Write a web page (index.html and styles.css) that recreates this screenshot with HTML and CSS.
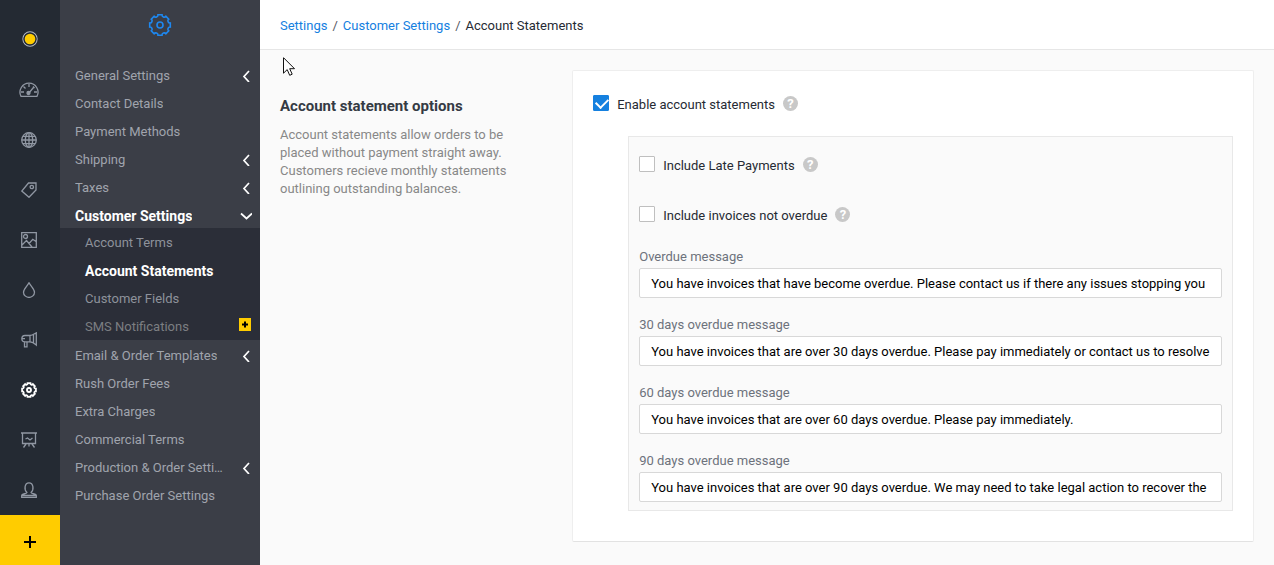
FILE: index.html
```html
<!DOCTYPE html>
<html lang="en">
<head>
  <meta charset="utf-8">
  <title>Account Statements</title>
  <meta name="viewport" content="width=device-width, initial-scale=1">
  <link rel="stylesheet" href="styles.css">
</head>

<body>
  <svg class="defs" aria-hidden="true">
    <symbol id="cog" viewBox="0 0 24 24">
      <path d="M10 1.7L14 1.7A2.2 2.2 0 0 0 17.9 3.3L20.7 6.1A2.2 2.2 0 0 0 22.3 10L22.3 14A2.2 2.2 0 0 0 20.7 17.9L17.9 20.7A2.2 2.2 0 0 0 14 22.3L10 22.3A2.2 2.2 0 0 0 6.1 20.7L3.3 17.9A2.2 2.2 0 0 0 1.7 14L1.7 10A2.2 2.2 0 0 0 3.3 6.1L6.1 3.3A2.2 2.2 0 0 0 10 1.7Z"/>
      <circle cx="12" cy="12" r="3"/>
    </symbol>
    <symbol id="left" viewBox="0 0 12 12"><path d="M9 1L4 6.500L9 12"/></symbol>
    <symbol id="down" viewBox="0 0 12 12"><path d="M1 3.500L6.500 8.500L12 3.500"/></symbol>
  </svg>

  <div class="app">
    <nav class="rail" aria-label="Main">
      <a class="logo" href="#" aria-label="Home"><svg viewBox="0 0 16 16"><circle class="ring" cx="8" cy="8" r="7"/><circle class="dot" cx="8" cy="8" r="6"/></svg></a>
      <a href="#" aria-label="Dashboard"><svg class="wide" viewBox="0 0 20 16"><path d="M2 14.3A9 9 0 1 1 18 14.3ZM10 2v3M4.500 4.500l2 2M2 10h3M15 10h3M9.500 11.500L14.500 5.500M14 4.500l1.500 1.500"/><circle class="solid" cx="9.500" cy="11" r="1.500"/></svg></a>
      <a href="#" aria-label="Website"><svg viewBox="0 0 16 16"><circle cx="8" cy="8" r="7.300"/><ellipse cx="8" cy="8" rx="3.700" ry="7.300"/><path d="M8 1v14M1 8h14M2 4.300h12M2 11.700h12"/></svg></a>
      <a href="#" aria-label="Products"><svg viewBox="0 0 16 16"><path d="M7.500 1H15V8L8 15.300L.8 9Z"/><circle cx="10.800" cy="5" r="1.700"/></svg></a>
      <a href="#" aria-label="Images"><svg viewBox="0 0 16 16"><path d="M.7.700H15.300V15.300H.700ZM1 13l4.500-4.500L11 15M8 11.500L11.800 7.300L15 9.500"/><circle cx="4.500" cy="4.500" r="2"/></svg></a>
      <a href="#" aria-label="Colours"><svg viewBox="0 0 16 16"><path d="M8 .8C6 4.500 2.500 7.200 2.500 10.200A5.500 5.200 0 0 0 13.500 10.200C13.500 7.200 10 4.500 8 .8Z"/></svg></a>
      <a href="#" aria-label="Marketing"><svg viewBox="0 0 16 16"><path d="M9 3.500H4A3 3 0 0 0 4 9.800H9ZM9 3.500C11.500 3.500 13 2 15.300.8V13C13 11 11.500 9.800 9 9.800M3.500 10V14.800H6V10M12.500 2.500V11M1 6.600H4"/></svg></a>
      <a class="current" href="#" aria-label="Settings"><svg><use href="#cog"/></svg></a>
      <a href="#" aria-label="Reports"><svg viewBox="0 0 16 16"><path d="M0 1H16M1.500 1V11.500H14.500V1M5 12L2.500 15.500M11 12L13.500 15.500M8 12V14.500M4.500 7L6.500 6L9 8L11.500 6"/></svg></a>
      <a href="#" aria-label="Account"><svg viewBox="0 0 16 16"><path d="M6 10.500C2.800 8 3.500.8 8 .8S13.200 8 10 10.500C10 12 15.300 11.500 15.300 13.500V15.300H.7V13.500C.7 11.500 6 12 6 10.500ZM1 13.500H15"/></svg></a>
      <button class="add" type="button" aria-label="Add"><svg viewBox="0 0 12 12"><path d="M6 0V12M0 6H12"/></svg></button>
    </nav>

    <aside class="sidebar">
      <svg class="sidebar-icon"><use href="#cog"/></svg>
      <ul class="menu">
        <li><a href="#"><span>General Settings</span><svg><use href="#left"/></svg></a></li>
        <li><a href="#"><span>Contact Details</span></a></li>
        <li><a href="#"><span>Payment Methods</span></a></li>
        <li><a href="#"><span>Shipping</span><svg><use href="#left"/></svg></a></li>
        <li><a href="#"><span>Taxes</span><svg><use href="#left"/></svg></a></li>
        <li>
          <a class="active" href="#"><span>Customer Settings</span><svg><use href="#down"/></svg></a>
          <ul class="submenu">
            <li><a href="#">Account Terms</a></li>
            <li><a class="active" href="#">Account Statements</a></li>
            <li><a href="#">Customer Fields</a></li>
            <li><a class="locked" href="#">SMS Notifications <svg class="plus" viewBox="0 0 12 13"><path d="M6 3.500V9.500M3 6.500H9"/></svg></a></li>
          </ul>
        </li>
        <li><a href="#"><span>Email &amp; Order Templates</span><svg><use href="#left"/></svg></a></li>
        <li><a href="#"><span>Rush Order Fees</span></a></li>
        <li><a href="#"><span>Extra Charges</span></a></li>
        <li><a href="#"><span>Commercial Terms</span></a></li>
        <li><a href="#"><span>Production &amp; Order Settings</span><svg><use href="#left"/></svg></a></li>
        <li><a href="#"><span>Purchase Order Settings</span></a></li>
      </ul>
    </aside>

    <main class="main">
      <header class="breadcrumb">
        <a href="#">Settings</a>
        <span class="sep">/</span>
        <a href="#">Customer Settings</a>
        <span class="sep">/</span>
        <span>Account Statements</span>
      </header>

      <div class="content">
        <section class="intro">
          <h1>Account statement options</h1>
          <p>Account statements allow orders to be placed without payment straight away. Customers recieve monthly statements outlining outstanding balances.</p>
        </section>

        <form class="card">
          <div class="check">
            <input type="checkbox" id="enable" checked>
            <label for="enable">Enable account statements</label>
            <button class="help" type="button">?</button>
          </div>

          <div class="panel">
            <div class="check">
              <input type="checkbox" id="late">
              <label for="late">Include Late Payments</label>
              <button class="help" type="button">?</button>
            </div>
            <div class="check">
              <input type="checkbox" id="notdue">
              <label for="notdue">Include invoices not overdue</label>
              <button class="help" type="button">?</button>
            </div>

            <div class="fields">
              <div class="field">
                <label for="msg">Overdue message</label>
                <input type="text" id="msg" value="You have invoices that have become overdue. Please contact us if there any issues stopping you">
              </div>
              <div class="field">
                <label for="msg30">30 days overdue message</label>
                <input type="text" id="msg30" value="You have invoices that are over 30 days overdue. Please pay immediately or contact us to resolve">
              </div>
              <div class="field">
                <label for="msg60">60 days overdue message</label>
                <input type="text" id="msg60" value="You have invoices that are over 60 days overdue. Please pay immediately.">
              </div>
              <div class="field">
                <label for="msg90">90 days overdue message</label>
                <input type="text" id="msg90" value="You have invoices that are over 90 days overdue. We may need to take legal action to recover the">
              </div>
            </div>
          </div>
        </form>
      </div>

      <svg class="pointer" viewBox="0 0 12 19"><path d="M.5.700V16.200L4.200 12.600L6.700 18.300L9.200 17.200L6.700 11.700H11.500Z"/></svg>
    </main>
  </div>
</body>
</html>
```
FILE: styles.css
```css
* {
  box-sizing: border-box;
}

html, body {
  height: 100%;
  margin: 0;
}

body {
  background-color: #fafafa;
  color: #262a33;
  font-family: Roboto, Arial, sans-serif;
  font-size: 13px;
  line-height: 18px;
}

a {
  color: #1580df;
  text-decoration: none;
}

button, input {
  font: inherit;
}

svg {
  fill: none;
  stroke: currentColor;
}

.defs {
  position: absolute;
  width: 0;
  height: 0;
}

.app {
  display: flex;
  min-height: 100%;
}

/* icon rail */
.rail {
  width: 60px;
  flex: none;
  display: flex;
  flex-direction: column;
  background-color: #242a33;
}

.rail a {
  height: 50px;
  display: flex;
  align-items: center;
  justify-content: center;
  padding-right: 2px;
  color: #9097a3;
}

.rail svg {
  width: 16px;
  height: 16px;
  stroke-width: 1.3;
}

.rail .wide {
  width: 20px;
}

.rail .solid {
  fill: currentColor;
}

.rail .logo {
  height: 65px;
  padding: 13px 0 0;
}

.logo .ring {
  stroke: #b4bac4;
}

.logo .dot {
  fill: #fc0;
  stroke: #242a33;
}

.rail .current {
  color: #fff;
}

.rail .current svg {
  stroke-width: 2.8;
}

.rail .add {
  height: 50px;
  margin-top: auto;
  padding: 8px 0 0;
  border: 0;
  background-color: #fc0;
  color: #000;
}

.rail .add svg {
  width: 12px;
  height: 12px;
  stroke-width: 2;
}

/* settings menu */
.sidebar {
  width: 200px;
  flex: none;
  background-color: #3b3e47;
}

.sidebar-icon {
  display: block;
  width: 24px;
  height: 24px;
  margin: 13px auto 23px;
  color: #1e88f0;
  stroke-width: 1.6;
}

.menu, .submenu {
  margin: 0;
  padding: 0;
  list-style: none;
}

.menu a {
  height: 28px;
  display: flex;
  align-items: center;
  justify-content: space-between;
  padding: 3px 8px 0 15px;
  color: #a0a4ad;
}

.menu span {
  max-width: 154px;
  overflow: hidden;
  text-overflow: ellipsis;
  white-space: nowrap;
}

.menu svg {
  width: 12px;
  height: 12px;
  flex: none;
  overflow: visible;
  color: #fff;
  stroke-width: 1.7;
}

.submenu {
  background-color: #2b2e38;
}

.submenu a {
  padding: 1px 9px 0 25px;
  color: #8e929b;
}

.menu .active {
  color: #fff;
  font-size: 14px;
  font-weight: 700;
}

.submenu .locked {
  color: #7c7e82;
}

.menu .plus {
  height: 13px;
  margin-bottom: 4px;
  background-color: #fc0;
  color: #000;
  stroke-width: 2;
}

/* page */
.main {
  position: relative;
  flex: 1;
  min-width: 0;
}

.breadcrumb {
  height: 50px;
  display: flex;
  align-items: center;
  gap: 5px;
  padding: 2px 20px 0;
  border-bottom: 1px solid #e6e6e6;
  background-color: #fff;
}

.breadcrumb .sep {
  color: #55585f;
}

.content {
  display: flex;
  align-items: flex-start;
  padding: 20px;
}

.intro {
  width: 30%;
  flex: none;
  padding: 27px 50px 0 0;
}

.intro h1 {
  margin: 0 0 11px;
  color: #353a44;
  font-size: 15px;
  line-height: 18px;
}

.intro p {
  margin: 0;
  color: #888;
}

.card {
  flex: 1;
  min-width: 0;
  padding: 23px 20px 30px;
  border: 1px solid #eee;
  border-bottom-color: #e2e2e2;
  border-radius: 2px;
  background-color: #fff;
}

.check {
  display: flex;
  align-items: center;
  height: 18px;
}

.check label {
  padding: 3px 8px 0;
}

.check input {
  position: relative;
  appearance: none;
  width: 16px;
  height: 16px;
  flex: none;
  margin: 0;
  border: 1px solid #bfbfbf;
  border-radius: 1px;
  background-color: #fff;
}

.check input:checked {
  border-color: #1580df;
  background-color: #1580df;
}

.check input:checked::after {
  content: "";
  position: absolute;
  left: 2px;
  top: 2px;
  width: 10px;
  height: 6px;
  border: solid #fff;
  border-width: 0 0 2px 2px;
  transform: rotate(-45deg);
}

.help {
  width: 15px;
  height: 15px;
  padding: 0;
  border: 0;
  border-radius: 50%;
  background-color: #c8c8c8;
  color: #fff;
  font-size: 13px;
  font-weight: 700;
  line-height: 15px;
}

.panel {
  margin: 24px 0 0 35px;
  padding: 18px 10px 8px;
  border: 1px solid #e8e8e8;
  background-color: #fafafa;
}

.panel .check {
  margin-bottom: 32px;
}

.panel .check + .check {
  margin-bottom: 25px;
}

.fields {
  display: flex;
  flex-direction: column;
  gap: 18px;
}

.field label {
  display: block;
  margin-bottom: 2px;
  color: #6d727c;
}

.field input {
  display: block;
  width: 100%;
  height: 30px;
  padding: 0 11px;
  border: 1px solid #d8d8d8;
  border-radius: 2px;
  background-color: #fff;
  color: #000;
}

.pointer {
  position: absolute;
  left: 23px;
  top: 57px;
  width: 12px;
  height: 19px;
  fill: #fff;
  stroke: #111;
}
```
